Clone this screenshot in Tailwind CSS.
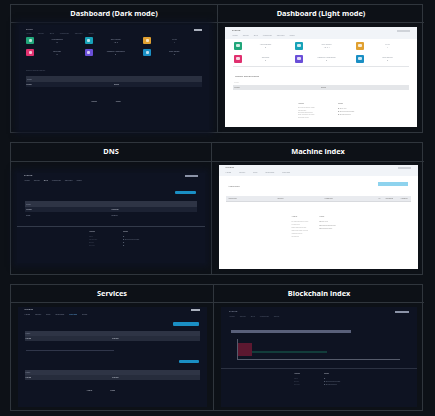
<!DOCTYPE html>
<html>
<head>
<meta charset="utf-8">
<script src="https://cdn.jsdelivr.net/npm/@tailwindcss/browser@4"></script>
</head>
<body class="m-0 bg-[#0d1117] font-['Noto_Sans','Liberation_Sans',sans-serif]">
<div class="w-[435px] h-[416px] overflow-hidden flex flex-col gap-[9px] pt-[4px] pl-[10px]">

<!-- TABLE 1 -->
<div class="w-[413px] border border-[#30363d] grid grid-cols-[207px_206px] grid-rows-[18px_109px] text-white">
  <div class="border-r border-b border-[#30363d] flex items-center justify-center text-[7.4px] font-bold">Dashboard (Dark mode)</div>
  <div class="border-b border-[#30363d] flex items-center justify-center text-[7.4px] font-bold">Dashboard (Light mode)</div>
  <div class="border-r border-[#30363d] flex items-center justify-center">
    <div class="w-[190px] h-[105px] bg-[#0e1322] shadow-[0_0_6px_4px_#0e1322] blur-[0.5px] px-[7px] pt-[3px] text-[#8b93a7] text-[2px] overflow-hidden">
      <div class="flex justify-between items-center h-[3px]"><span class="text-[#aab] ">Expertt</span><span class="w-[8px] h-[2px] bg-[#aab0bd]"></span></div>
      <div class="flex gap-[6px] h-[5px] items-center text-[#555d70]"><span>Home</span><span>Server</span><span>DNS</span><span>Machines</span><span>Services</span><span>Chain</span></div>
      <div class="grid grid-cols-3 gap-y-[5px] mt-[1px]">
        <div class="flex items-center h-[7px]"><span class="w-[8px] h-[7px] rounded-[1px] bg-[#21a67a] flex items-center justify-center"><span class="w-[3px] h-[3px] rounded-[1px] bg-white/70"></span></span><span class="w-[46px] text-center">Applications<br>0</span></div>
        <div class="flex items-center h-[7px]"><span class="w-[8px] h-[7px] rounded-[1px] bg-[#17a2b8] flex items-center justify-center"><span class="w-[3px] h-[3px] rounded-[1px] bg-white/70"></span></span><span class="w-[46px] text-center">CPU Cores<br>1 2 3</span></div>
        <div class="flex items-center h-[7px]"><span class="w-[8px] h-[7px] rounded-[1px] bg-[#e0a030] flex items-center justify-center"><span class="w-[3px] h-[3px] rounded-[1px] bg-white/70"></span></span><span class="w-[46px] text-center">RAM<br>4</span></div>
        <div class="flex items-center h-[7px]"><span class="w-[8px] h-[7px] rounded-[1px] bg-[#e0306f] flex items-center justify-center"><span class="w-[3px] h-[3px] rounded-[1px] bg-white/70"></span></span><span class="w-[46px] text-center">Services<br>0</span></div>
        <div class="flex items-center h-[7px]"><span class="w-[8px] h-[7px] rounded-[1px] bg-[#6a4fd8] flex items-center justify-center"><span class="w-[3px] h-[3px] rounded-[1px] bg-white/70"></span></span><span class="w-[46px] text-center">Network Interfaces<br>0</span></div>
        <div class="flex items-center h-[7px]"><span class="w-[8px] h-[7px] rounded-[1px] bg-[#1a8fc4] flex items-center justify-center"><span class="w-[3px] h-[3px] rounded-[1px] bg-white/70"></span></span><span class="w-[46px] text-center">Disk Space<br>0</span></div>
      </div>
      <div class="mt-[13px] text-[#4d5567]">Recent deployments</div>
      <div class="mt-[4px] h-[6px] bg-[#2a3040] flex items-center px-[1px]">Filter</div>
      <div class="h-[5px] grid grid-cols-2 items-center text-[#c3c8d4] bg-[#181e2f]"><span>Name</span><span>State</span></div>
      <div class="mt-[13px] flex pl-[65px] gap-[19px] text-[#c3c8d4]"><span>About</span><span>Links</span></div>
    </div>
  </div>
  <div class="flex items-center justify-center pb-[2px]">
    <div class="w-[192px] h-[100px] bg-white text-[#9aa0a8] text-[2px] overflow-hidden blur-[0.5px]">
      <div class="h-[12px] bg-[#f1f4f8] px-[7px] pt-[2px]">
        <div class="flex justify-between h-[4px] items-center"><span class="text-[#555] text-[2.5px]">Expertt</span><span class="w-[13px] h-[2px] bg-[#cfd3d9]"></span></div>
        <div class="flex gap-[5px] h-[5px] items-center text-[#a0a6b0]"><span>Home</span><span>Server</span><span>DNS</span><span>Machines</span><span>Services</span><span>Chain</span></div>
      </div>
      <div class="grid grid-cols-3 gap-y-[5px] mt-[3px] pl-[9px]">
        <div class="flex items-center h-[8px]"><span class="w-[8px] h-[8px] rounded-[1px] bg-[#21a67a] flex items-center justify-center"><span class="w-[4px] h-[3px] rounded-[1px] bg-white/80"></span></span><span class="w-[47px] text-center">Applications<br>0</span></div>
        <div class="flex items-center h-[8px]"><span class="w-[8px] h-[8px] rounded-[1px] bg-[#17a2b8] flex items-center justify-center"><span class="w-[4px] h-[3px] rounded-[1px] bg-white/80"></span></span><span class="w-[47px] text-center">CPU Cores<br>1 2 3 4</span></div>
        <div class="flex items-center h-[8px]"><span class="w-[8px] h-[8px] rounded-[1px] bg-[#e0a030] flex items-center justify-center"><span class="w-[4px] h-[3px] rounded-[1px] bg-white/80"></span></span><span class="w-[47px] text-center">RAM<br>4</span></div>
        <div class="flex items-center h-[8px]"><span class="w-[8px] h-[8px] rounded-[1px] bg-[#e0306f] flex items-center justify-center"><span class="w-[4px] h-[3px] rounded-[1px] bg-white/80"></span></span><span class="w-[47px] text-center">Services<br>0</span></div>
        <div class="flex items-center h-[8px]"><span class="w-[8px] h-[8px] rounded-[1px] bg-[#6a4fd8] flex items-center justify-center"><span class="w-[4px] h-[3px] rounded-[1px] bg-white/80"></span></span><span class="w-[47px] text-center">Network Interfaces<br>0</span></div>
        <div class="flex items-center h-[8px]"><span class="w-[8px] h-[8px] rounded-[1px] bg-[#1a8fc4] flex items-center justify-center"><span class="w-[4px] h-[3px] rounded-[1px] bg-white/80"></span></span><span class="w-[47px] text-center">Disk Space<br>0</span></div>
      </div>
      <div class="mx-[8px] mt-[3px] h-[1px] bg-[#e3e5e8]"></div>
      <div class="pl-[10px] mt-[8px] text-[#666] text-[2.5px]">Recent deployments</div>
      <div class="pl-[9px] mt-[3px] text-[#ccc]">Filter</div>
      <div class="mx-[8px] mt-[1px] h-[5px] bg-[#e4e6e9] grid grid-cols-2 items-center text-[#777] px-[1px]"><span>Name</span><span>State</span></div>
      <div class="mt-[12px] flex pl-[73px] gap-[20px] text-[#666]">
        <div class="w-[20px]"><div class="mb-[2px]">About</div><div class="text-[#bbb] leading-[2.4px]">Experimental tool<br>Features<br>Documentation<br>Get started guide<br>Community</div></div>
        <div><div class="mb-[2px]">Links</div><div class="text-[#aaa] leading-[3px]">■ GitHub<br>■ Documentation<br>■ Discussions</div></div>
      </div>
    </div>
  </div>
</div>

<!-- TABLE 2 -->
<div class="w-[413px] border border-[#30363d] grid grid-cols-[201px_212px] grid-rows-[19px_112px] text-white">
  <div class="border-r border-b border-[#30363d] flex items-center justify-center text-[7.4px] font-bold">DNS</div>
  <div class="border-b border-[#30363d] flex items-center justify-center text-[7.4px] font-bold">Machine index</div>
  <div class="border-r border-[#30363d] flex items-center justify-center">
    <div class="w-[188px] h-[90px] bg-[#0e1322] shadow-[0_0_6px_4px_#0e1322] blur-[0.5px] text-[#8b93a7] text-[2px] overflow-hidden">
      <div class="px-[7px] pt-[1px]">
        <div class="flex justify-between items-center h-[4px]"><span class="text-[#c3c8d4] text-[2.5px]">Expertt</span><span class="w-[13px] h-[2px] bg-[#8b93a7]"></span></div>
        <div class="flex gap-[4px] h-[5px] items-center text-[#777f92]"><span>Home</span><span>Server</span><span class="text-[#c3c8d4]">DNS</span><span>Machines</span><span>Services</span><span>Chain</span></div>
        <div class="flex justify-end mt-[8px] pr-[2px]"><span class="w-[21px] h-[3px] rounded-[1px] bg-[#1a8fc4]"></span></div>
        <div class="mt-[7px] h-[6px] bg-[#2e3445] flex items-center px-[1px] mx-[1px]">Filter</div>
        <div class="h-[5px] grid grid-cols-2 items-center text-[#c3c8d4] bg-[#1c2233] mx-[1px] px-[1px]"><span>Name</span><span>Address</span></div>
        <div class="h-[6px] grid grid-cols-2 items-center text-[#8b93a7] mx-[1px] px-[1px]"><span>local</span><span>10.0.0.1</span></div>
      </div>
      <div class="mt-[8px] border-t border-[#333a4a] flex pl-[72px] gap-[18px] pt-[3px]">
        <div class="w-[16px]"><div class="text-[#c3c8d4] mb-[2px]">About</div><div class="text-[#3c4355] leading-[3px]">Tool<br>Features<br>Docs<br>Guide</div></div>
        <div><div class="text-[#c3c8d4] mb-[2px]">Links</div><div class="text-[#5a6274] leading-[3px]">■<br>■ Documentation<br>■<br>■</div></div>
      </div>
    </div>
  </div>
  <div class="flex items-center justify-center pb-[3px]">
    <div class="w-[199px] h-[104px] bg-white text-[#9aa0a8] text-[2px] overflow-hidden blur-[0.5px]">
      <div class="h-[11px] bg-[#f1f4f8] px-[7px] pt-[1px]">
        <div class="flex justify-between h-[4px] items-center"><span class="text-[#666] text-[2.5px]">Expertt</span><span class="w-[13px] h-[2px] bg-[#cfd3d9]"></span></div>
        <div class="flex gap-[8px] h-[5px] items-center"><span>Home</span><span>Server</span><span>DNS</span><span>Machines</span><span>Services</span></div>
      </div>
      <div class="flex justify-between items-end px-[10px] mt-[6px]"><span class="text-[#777] text-[2.5px] mt-[3px]">Machines</span><span class="w-[30px] h-[4px] bg-[#8ed3ee] -mt-[1px] mb-[2px]"></span></div>
      <div class="mx-[7px] mt-[8px] h-[6px] bg-[#e9ebef] border-b border-[#d8dade] flex items-center px-[3px] text-[#777]"><span class="w-[49px]">Machine</span><span class="w-[47px]">Server</span><span class="w-[47px]">Instance</span><span class="w-[7px]"></span><span class="w-[7px]">IP</span><span class="w-[15px]">Created</span><span>Actions</span></div>
      <div class="mt-[13px] flex pl-[73px] gap-[8px] text-[#777]">
        <div class="w-[20px]"><div class="mb-[2px]">About</div><div class="text-[#bbb] leading-[3px]">Experimental tool<br>Features<br>Documentation<br>Get started guide<br>Community<br>Support</div></div>
        <div><div class="mb-[2px]">Links</div><div class="text-[#aaa] leading-[3.4px]">■ GitHub<br>■ Documentation<br>■ Discussions</div></div>
      </div>
    </div>
  </div>
</div>

<!-- TABLE 3 -->
<div class="w-[413px] border border-[#30363d] grid grid-cols-[203px_210px] grid-rows-[18px_107px] text-white">
  <div class="border-r border-b border-[#30363d] flex items-center justify-center text-[7.4px] font-bold">Services</div>
  <div class="border-b border-[#30363d] flex items-center justify-center text-[7.4px] font-bold">Blockchain index</div>
  <div class="border-r border-[#30363d] flex items-center justify-center">
    <div class="w-[189px] h-[100px] bg-[#0e1322] blur-[0.5px] text-[#8b93a7] text-[2px] overflow-hidden px-[7px]">
      <div class="flex justify-between items-center h-[4px] mt-[1px]"><span class="text-[#c3c8d4] text-[2.5px]">Expertt</span><span class="w-[9px] h-[2px] bg-[#aab0bd]"></span></div>
      <div class="flex gap-[5px] h-[5px] items-center text-[#777f92]"><span>Home</span><span>Server</span><span>DNS</span><span>Machines</span><span class="text-[#5aa0d8]">Services</span><span>Chain</span></div>
      <div class="flex justify-end mt-[5px] pr-[1px]"><span class="w-[26px] h-[4px] rounded-[1px] bg-[#1a8fc4]"></span></div>
      <div class="mt-[5px] h-[5px] bg-[#2e3445] flex items-center px-[1px]">Filter</div>
      <div class="h-[5px] grid grid-cols-2 items-center text-[#c3c8d4] bg-[#262c3c] px-[1px]"><span>Name</span><span>Project</span></div>
      <div class="mt-[9px] w-[88px] h-[1px] ml-[1px] bg-[#30364a]"></div>
      <div class="flex justify-end mt-[9px] pr-[1px]"><span class="w-[20px] h-[3px] rounded-[1px] bg-[#1a8fc4]"></span></div>
      <div class="mt-[7px] h-[5px] bg-[#2e3445] flex items-center px-[1px]">Filter</div>
      <div class="h-[5px] grid grid-cols-2 items-center text-[#c3c8d4] bg-[#262c3c] px-[1px]"><span>Name</span><span>Project</span></div>
      <div class="mt-[9px] flex pl-[62px] gap-[18px] text-[#c3c8d4]"><span>About</span><span>Links</span></div>
    </div>
  </div>
  <div class="flex items-center justify-center">
    <div class="w-[196px] h-[100px] bg-[#0e1322] blur-[0.5px] text-[#8b93a7] text-[2px] overflow-hidden">
      <div class="px-[8px] pt-[3px]">
        <div class="flex justify-between items-center h-[4px]"><span class="text-[#8b93a7] text-[2.5px]">Expertt</span><span class="w-[14px] h-[2px] bg-[#8b93a7]"></span></div>
        <div class="flex gap-[5px] h-[5px] items-center text-[#555d70]"><span>Home</span><span>Server</span><span>DNS</span><span>Machines</span><span>Chain</span></div>
        <div class="mt-[11px] h-[3px] ml-[2px] mr-[58px] bg-[#59607a] flex items-center text-[#c3c8d4]"><span class="w-[5px]"></span></div>
        <div class="mt-[6px] ml-[8px] mr-[9px] border-l border-b border-[#555b6b] h-[21px] relative">
          <div class="absolute left-0 top-[4px] w-[14px] h-[13px] bg-[#5c1830]"></div>
          <div class="absolute left-[14px] top-[12px] w-[75px] h-[2px] bg-[#123c3a]"></div>
        </div>
      </div>
      <div class="mt-[8px] border-t border-[#2c3242] flex pl-[73px] gap-[20px] pt-[3px]">
        <div class="w-[10px]"><div class="text-[#c3c8d4] mb-[2px]">About</div><div class="text-[#3c4355] leading-[3px]">Tool<br>Docs<br>Guide</div></div>
        <div><div class="text-[#c3c8d4] mb-[2px]">Links</div><div class="text-[#5a6274] leading-[3px]">■<br>■ Documentation<br>■ Discussions</div></div>
      </div>
    </div>
  </div>
</div>

</div>
</body>
</html>
